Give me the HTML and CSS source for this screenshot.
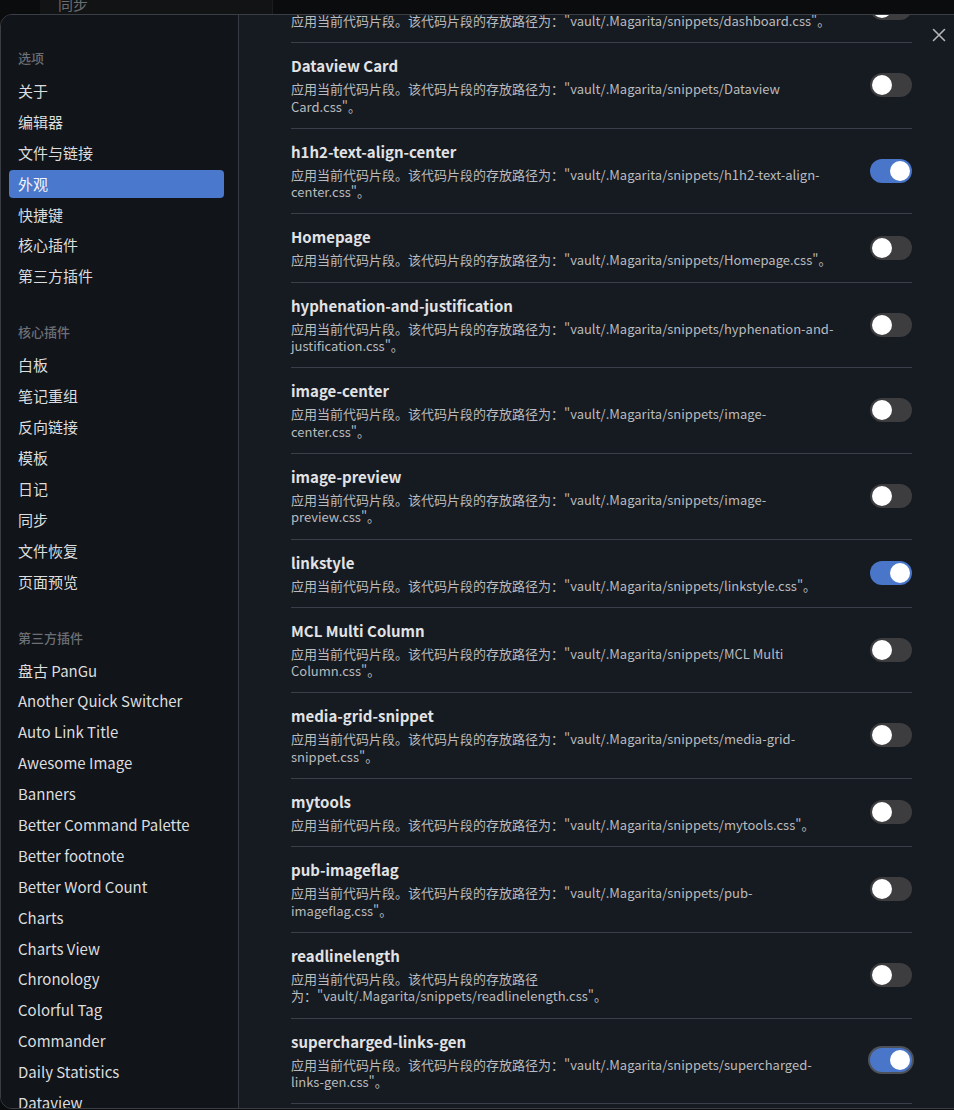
FILE: index.html
```html
<!DOCTYPE html>
<html lang="zh-CN">
<head>
  <meta charset="UTF-8">
  <title>设置 - 外观</title>
  <link rel="stylesheet" href="styles.css">
</head>
<body>

<div class="app">
  <div class="app-side">
    <div class="app-side-panel">
      <div class="app-side-item">同步</div>
    </div>
  </div>
</div>

<div class="modal">
  <div class="modal-close">
    <svg width="14" height="14" viewBox="0 0 14 14"><path d="M1.5 1.5 L12.5 12.5 M12.5 1.5 L1.5 12.5" stroke="#b4b6ba" stroke-width="1.6" stroke-linecap="round" fill="none"/></svg>
  </div>

  <div class="nav">
    <div class="nav-group">
      <div class="nav-title">选项</div>
      <div class="nav-item">关于</div>
      <div class="nav-item">编辑器</div>
      <div class="nav-item">文件与链接</div>
      <div class="nav-item active">外观</div>
      <div class="nav-item">快捷键</div>
      <div class="nav-item">核心插件</div>
      <div class="nav-item">第三方插件</div>
    </div>
    <div class="nav-group">
      <div class="nav-title">核心插件</div>
      <div class="nav-item">白板</div>
      <div class="nav-item">笔记重组</div>
      <div class="nav-item">反向链接</div>
      <div class="nav-item">模板</div>
      <div class="nav-item">日记</div>
      <div class="nav-item">同步</div>
      <div class="nav-item">文件恢复</div>
      <div class="nav-item">页面预览</div>
    </div>
    <div class="nav-group">
      <div class="nav-title">第三方插件</div>
      <div class="nav-item">盘古 PanGu</div>
      <div class="nav-item">Another Quick Switcher</div>
      <div class="nav-item">Auto Link Title</div>
      <div class="nav-item">Awesome Image</div>
      <div class="nav-item">Banners</div>
      <div class="nav-item">Better Command Palette</div>
      <div class="nav-item">Better footnote</div>
      <div class="nav-item">Better Word Count</div>
      <div class="nav-item">Charts</div>
      <div class="nav-item">Charts View</div>
      <div class="nav-item">Chronology</div>
      <div class="nav-item">Colorful Tag</div>
      <div class="nav-item">Commander</div>
      <div class="nav-item">Daily Statistics</div>
      <div class="nav-item">Dataview</div>
    </div>
  </div>

  <div class="content">
    <div class="snippets">
      <div class="snippet">
        <div class="snippet-info">
          <div class="snippet-name">dashboard</div>
          <div class="snippet-desc">应用当前代码片段。该代码片段的存放路径为："vault/.Magarita/snippets/dashboard.css"。</div>
        </div>
        <div class="toggle"></div>
      </div>
      <div class="snippet">
        <div class="snippet-info">
          <div class="snippet-name">Dataview Card</div>
          <div class="snippet-desc">应用当前代码片段。该代码片段的存放路径为："vault/.Magarita/snippets/Dataview Card.css"。</div>
        </div>
        <div class="toggle"></div>
      </div>
      <div class="snippet">
        <div class="snippet-info">
          <div class="snippet-name">h1h2-text-align-center</div>
          <div class="snippet-desc">应用当前代码片段。该代码片段的存放路径为："vault/.Magarita/snippets/h1h2-text-align-center.css"。</div>
        </div>
        <div class="toggle on"></div>
      </div>
      <div class="snippet">
        <div class="snippet-info">
          <div class="snippet-name">Homepage</div>
          <div class="snippet-desc">应用当前代码片段。该代码片段的存放路径为："vault/.Magarita/snippets/Homepage.css"。</div>
        </div>
        <div class="toggle"></div>
      </div>
      <div class="snippet">
        <div class="snippet-info">
          <div class="snippet-name">hyphenation-and-justification</div>
          <div class="snippet-desc">应用当前代码片段。该代码片段的存放路径为："vault/.Magarita/snippets/hyphenation-and-justification.css"。</div>
        </div>
        <div class="toggle"></div>
      </div>
      <div class="snippet">
        <div class="snippet-info">
          <div class="snippet-name">image-center</div>
          <div class="snippet-desc">应用当前代码片段。该代码片段的存放路径为："vault/.Magarita/snippets/image-center.css"。</div>
        </div>
        <div class="toggle"></div>
      </div>
      <div class="snippet">
        <div class="snippet-info">
          <div class="snippet-name">image-preview</div>
          <div class="snippet-desc">应用当前代码片段。该代码片段的存放路径为："vault/.Magarita/snippets/image-preview.css"。</div>
        </div>
        <div class="toggle"></div>
      </div>
      <div class="snippet">
        <div class="snippet-info">
          <div class="snippet-name">linkstyle</div>
          <div class="snippet-desc">应用当前代码片段。该代码片段的存放路径为："vault/.Magarita/snippets/linkstyle.css"。</div>
        </div>
        <div class="toggle on"></div>
      </div>
      <div class="snippet">
        <div class="snippet-info">
          <div class="snippet-name">MCL Multi Column</div>
          <div class="snippet-desc">应用当前代码片段。该代码片段的存放路径为："vault/.Magarita/snippets/MCL Multi Column.css"。</div>
        </div>
        <div class="toggle"></div>
      </div>
      <div class="snippet">
        <div class="snippet-info">
          <div class="snippet-name">media-grid-snippet</div>
          <div class="snippet-desc">应用当前代码片段。该代码片段的存放路径为："vault/.Magarita/snippets/media-grid-snippet.css"。</div>
        </div>
        <div class="toggle"></div>
      </div>
      <div class="snippet">
        <div class="snippet-info">
          <div class="snippet-name">mytools</div>
          <div class="snippet-desc">应用当前代码片段。该代码片段的存放路径为："vault/.Magarita/snippets/mytools.css"。</div>
        </div>
        <div class="toggle"></div>
      </div>
      <div class="snippet">
        <div class="snippet-info">
          <div class="snippet-name">pub-imageflag</div>
          <div class="snippet-desc">应用当前代码片段。该代码片段的存放路径为："vault/.Magarita/snippets/pub-imageflag.css"。</div>
        </div>
        <div class="toggle"></div>
      </div>
      <div class="snippet">
        <div class="snippet-info">
          <div class="snippet-name">readlinelength</div>
          <div class="snippet-desc">应用当前代码片段。该代码片段的存放路径为："vault/.Magarita/snippets/readlinelength.css"。</div>
        </div>
        <div class="toggle"></div>
      </div>
      <div class="snippet">
        <div class="snippet-info">
          <div class="snippet-name">supercharged-links-gen</div>
          <div class="snippet-desc">应用当前代码片段。该代码片段的存放路径为："vault/.Magarita/snippets/supercharged-links-gen.css"。</div>
        </div>
        <div class="toggle on focused"></div>
      </div>
    </div>
  </div>
</div>

</body>
</html>
```

FILE: styles.css
```css
html, body {
  margin: 0;
  height: 100%;
}
body {
  font-family: "Noto Sans CJK SC", sans-serif;
  background-color: #0b0c0e;
  color: #dcddde;
  overflow: hidden;
}

/* app behind the modal */
.app {
  height: 100%;
  display: flex;
}
.app-side {
  width: 28px;
  padding-left: 12px;
  border-right: 1px solid #141517;
}
.app-side-panel {
  margin-left: 28px;
  width: 232px;
  height: 100%;
  background-color: #121315;
  border-right: 1px solid #1c1d20;
  flex-shrink: 0;
}
.app-side-item {
  padding-left: 18px;
  margin-top: -7px;
  font-size: 15px;
  color: #6b6d70;
}

/* settings modal */
.modal {
  position: absolute;
  top: 14px;
  left: 0;
  right: -14px;
  bottom: 1px;
  display: flex;
  border: 1px solid #3b3e45;
  border-radius: 12px;
  background-color: #161a21;
  overflow: hidden;
}
.modal-close {
  position: absolute;
  top: 13px;
  right: 21px;
  width: 14px;
  height: 14px;
}
.modal-close svg {
  display: block;
}

.nav {
  width: 215px;
  padding: 34px 14px 0 8px;
  background-color: #111419;
  border-right: 1px solid #363a43;
  flex-shrink: 0;
}
.nav-group {
  margin-bottom: 33px;
}
.nav-title {
  font-size: 13px;
  line-height: 18px;
  padding-left: 9px;
  margin-bottom: 10px;
  color: #6c6f75;
  font-weight: 500;
}
.nav-item {
  font-size: 15px;
  line-height: 28px;
  height: 28px;
  padding-left: 9px;
  margin-bottom: 2.9px;
  border-radius: 4px;
  white-space: nowrap;
}
.nav-item.active {
  background-color: #4a78cc;
  color: #f2f4f8;
}

.content {
  flex: 1;
  padding: 0 55px 0 52px;
}
.snippets {
  margin-top: -40px;
}
.snippet {
  display: flex;
  align-items: center;
  gap: 32px;
  padding: 12px 0 13px;
  border-bottom: 1px solid #3a3e49;
}
.snippet-info {
  flex: 1;
}
.snippet-name {
  font-size: 15px;
  line-height: 22px;
  margin-bottom: 3px;
  font-weight: 700;
  color: #e2e3e5;
}
.snippet-desc {
  font-size: 13px;
  line-height: 17.3px;
  color: #b9bbbe;
}

.toggle {
  position: relative;
  width: 42px;
  height: 24px;
  border-radius: 12px;
  background-color: #3d3d3f;
  flex-shrink: 0;
}
.toggle::after {
  content: "";
  position: absolute;
  top: 2px;
  left: 2px;
  width: 20px;
  height: 20px;
  border-radius: 50%;
  background-color: #ffffff;
}
.toggle.on {
  background-color: #4a76c9;
}
.toggle.on::after {
  left: 20px;
}
.toggle.focused {
  box-shadow: 0 0 0 2px #4d515a;
}
```
